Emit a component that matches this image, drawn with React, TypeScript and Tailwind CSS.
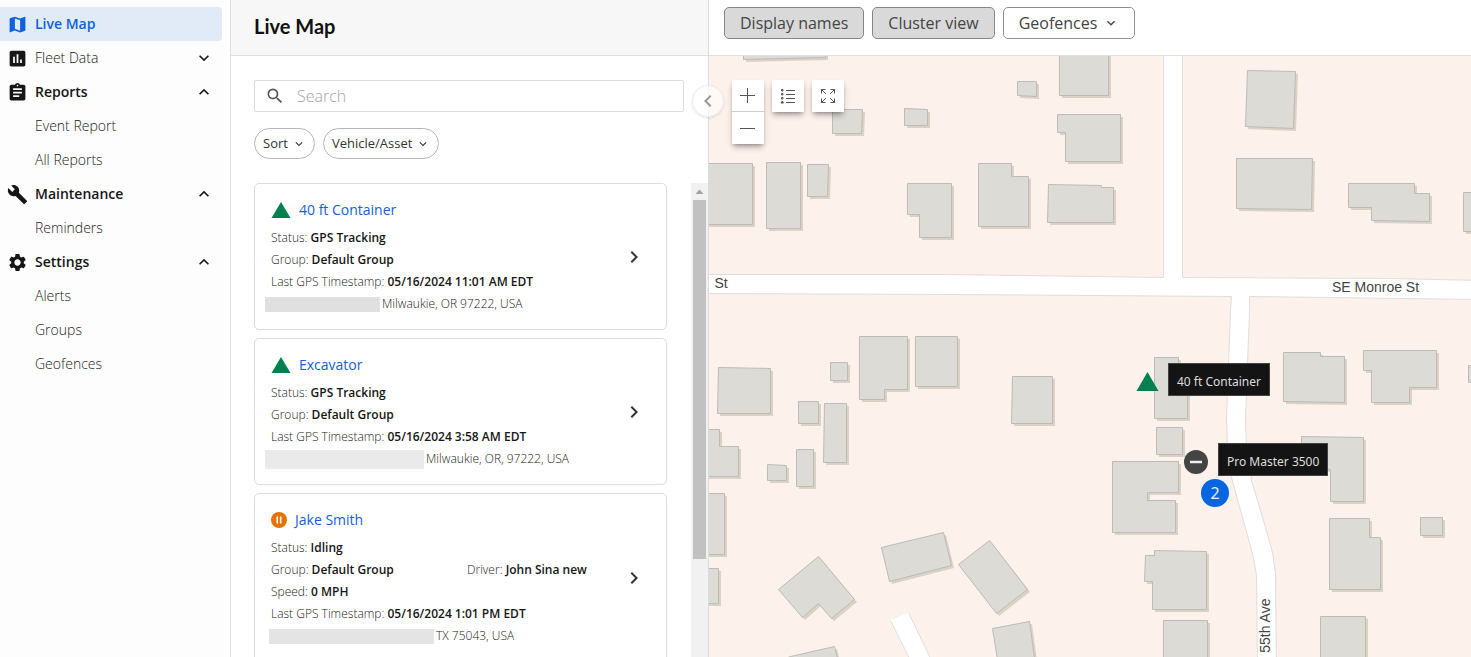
import React, { useState } from 'react';
import {
  MdAssessment,
  MdAssignment,
  MdBuild,
  MdChevronLeft,
  MdChevronRight,
  MdExpandLess,
  MdExpandMore,
  MdMap,
  MdSearch,
  MdSettings,
} from 'react-icons/md';

const sections = [
  { label: 'Fleet Data', icon: MdAssessment, open: false, items: [] },
  { label: 'Reports', icon: MdAssignment, open: true, items: ['Event Report', 'All Reports'] },
  { label: 'Maintenance', icon: MdBuild, open: true, items: ['Reminders'] },
  { label: 'Settings', icon: MdSettings, open: true, items: ['Alerts', 'Groups', 'Geofences'] },
];

const vehicles = [
  {
    name: '40 ft Container',
    type: 'asset',
    status: 'GPS Tracking',
    timestamp: '05/16/2024 11:01 AM EDT',
    address: 'Milwaukie, OR 97222, USA',
    mask: '-ml-1.5 w-[115px] h-[15px] bg-[#e1e0e0]',
  },
  {
    name: 'Excavator',
    type: 'asset',
    status: 'GPS Tracking',
    timestamp: '05/16/2024 3:58 AM EDT',
    address: 'Milwaukie, OR, 97222, USA',
    mask: '-ml-1.5 w-[159px] h-[19px] bg-[#eaeaea]',
  },
  {
    name: 'Jake Smith',
    type: 'vehicle',
    status: 'Idling',
    driver: 'John Sina new',
    speed: '0 MPH',
    timestamp: '05/16/2024 1:01 PM EDT',
    address: 'TX 75043, USA',
    mask: '-ml-0.5 w-[165px] h-[15px] bg-[#e4e4e5]',
  },
];

const buildings = [
  '743,50 743,59 825,57 825,50',
  '934,50 969,50 969,53 934,53',
  '1059,50 1108,50 1108,95 1059,95',
  '1017,81 1036,81 1036,96 1017,95',
  '832,109 862,109 861,133 832,133',
  '904,108 927,109 927,125 904,125',
  '1057,114 1120,114 1120,161 1065,161 1065,132 1057,132',
  '700,163 752,163 752,224 700,224',
  '766,162 800,162 800,228 766,228',
  '807,164 828,164 827,196 807,196',
  '907,183 951,183 951,237 919,237 919,214 907,214',
  '978,163 1011,163 1011,176 1028,176 1028,226 978,226',
  '1048,184 1101,185 1101,187 1113,187 1113,222 1047,222',
  '1247,70 1295,71 1293,128 1245,126',
  '1236,158 1312,158 1311,209 1236,208',
  '1348,183 1414,183 1414,193 1429,193 1429,221 1371,220 1371,207 1348,207',
  '1463,192 1480,192 1480,231 1463,231',
  '718,367 770,368 770,413 717,413',
  '830,362 847,362 847,380 830,380',
  '859,336 907,336 907,389 884,389 884,399 859,399',
  '915,336 957,336 957,386 915,386',
  '1012,376 1052,376 1052,423 1011,423',
  '798,401 818,401 818,423 798,423',
  '824,403 846,403 846,462 823,462',
  '700,429 719,429 719,446 738,446 738,476 700,476',
  '767,464 786,465 786,480 767,480',
  '796,449 813,449 813,486 796,486',
  '700,493 724,493 724,554 700,554',
  '700,568 718,568 718,603 700,603',
  '778,589 818,556 854,599 831,618 818,603 802,617',
  '881,547 943,532 951,565 889,581',
  '958,564 989,540 1027,589 996,613',
  '774,662 790,656 834,646 838,662',
  '992,628 1029,621 1035,665 998,665',
  '1154,357 1178,357 1178,390 1187,390 1187,418 1154,418',
  '1156,427 1182,427 1182,454 1156,454',
  '1112,461 1178,461 1178,492 1147,492 1147,500 1175,500 1175,532 1112,532',
  '1145,555 1154,555 1154,550 1206,551 1206,609 1152,609 1152,581 1144,581',
  '1163,620 1207,620 1207,665 1163,665',
  '1283,352 1320,352 1320,356 1344,356 1344,402 1283,401',
  '1363,350 1436,350 1436,387 1409,387 1409,402 1371,402 1371,370 1363,370',
  '1468,365 1480,365 1480,382 1468,382',
  '1301,436 1363,437 1363,501 1330,501 1330,469 1301,469',
  '1329,518 1369,518 1369,537 1380,537 1380,589 1329,589',
  '1420,517 1442,517 1442,535 1420,535',
  '1320,616 1365,616 1365,665 1320,665',
];

const Sidebar: React.FC = () => (
  <nav className="w-[231px] shrink-0 border-r border-[#dfdfdf] bg-[#fdfdfd] pt-[7px] text-sm">
    <a href="#live-map" className="mr-2 flex h-[34px] items-center gap-[7px] rounded-r bg-[#e1ebf7] pl-[7px] font-semibold text-[#0b62dc]">
      <MdMap className="size-[21px]" />
      Live Map
    </a>
    {sections.map(({ label, icon: Icon, open, items }) => (
      <div key={label}>
        <button
          type="button"
          aria-expanded={open}
          className={`flex h-[34px] w-full items-center gap-[7px] pl-[7px] pr-4 text-[#161616] ${open ? 'font-semibold' : 'font-light'}`}
        >
          <Icon className="size-[21px]" />
          <span className="flex-1 text-left">{label}</span>
          {open ? <MdExpandLess className="size-5" /> : <MdExpandMore className="size-5" />}
        </button>
        {items.map((item) => (
          <a key={item} href="#reports" className="flex h-[34px] items-center pl-[35px] font-light text-[#222]">
            {item}
          </a>
        ))}
      </div>
    ))}
  </nav>
);

const Field: React.FC<{ label: string; value: string; className?: string }> = ({ label, value, className }) => (
  <span className={className}>
    {label}: <span className="font-semibold text-[#161616]">{value}</span>
  </span>
);

const VehicleCard: React.FC<{ vehicle: (typeof vehicles)[number] }> = ({ vehicle }) => (
  <li className="flex items-center rounded-[5px] border border-[#dcdcdc] bg-white pt-[15px] pr-5 pb-3.5 pl-4">
    <div className="min-w-0 flex-1 text-xs/[22px] font-light whitespace-nowrap text-[#222]">
      <div className="mb-1.5 flex h-[22px] items-center gap-2">
        {vehicle.type === 'asset' ? (
          <svg width="20" height="16" viewBox="0 0 20 16" className="shrink-0">
            <path d="M10 0L19.500 16H.5z" fill="#00804f" />
          </svg>
        ) : (
          <svg width="16" height="16" viewBox="0 0 16 16" className="shrink-0">
            <circle cx="8" cy="8" r="8" fill="#e57200" />
            <path d="M6.300 4.500v7M9.700 4.500v7" stroke="#fff" strokeWidth="1.600" />
          </svg>
        )}
        <a href="#vehicle" className="text-sm font-normal text-[#1560d8]">{vehicle.name}</a>
      </div>
      <div>
        <Field label="Status" value={vehicle.status} />
      </div>
      <div className="flex">
        <Field label="Group" value="Default Group" className="w-[196px]" />
        {vehicle.driver && <Field label="Driver" value={vehicle.driver} />}
      </div>
      {vehicle.speed && (
        <div>
          <Field label="Speed" value={vehicle.speed} />
        </div>
      )}
      <div>
        <Field label="Last GPS Timestamp" value={vehicle.timestamp} />
      </div>
      <div className="flex items-center gap-0.5">
        <span className={`shrink-0 ${vehicle.mask}`} />
        {vehicle.address}
      </div>
    </div>
    <button type="button" aria-label={`Open ${vehicle.name}`} className="text-[#333]">
      <MdChevronRight className="size-6" />
    </button>
  </li>
);

const ListPanel: React.FC = () => {
  const [search, setSearch] = useState('');

  return (
    <section className="flex w-[478px] shrink-0 flex-col border-r border-[#dcdcdc]">
      <header className="flex h-14 shrink-0 items-center border-b border-[#dfdfdf] bg-[#f7f7f7] pb-1 pl-[23px]">
        <h1 className="font-[Lato,sans-serif] text-xl font-bold text-[#111]">Live Map</h1>
      </header>
      <div className="pt-6 pr-6 pl-[23px]">
        <label className="flex h-8 items-center gap-3 rounded-xs border border-[#dcdcdc] pl-2.5">
          <MdSearch className="size-5 text-[#555]" />
          <input
            type="text"
            aria-label="Search"
            placeholder="Search"
            value={search}
            onChange={(e) => setSearch(e.target.value)}
            className="min-w-0 flex-1 bg-transparent font-light outline-none placeholder:text-[#a5a5a5]"
          />
        </label>
        <div className="mt-4 flex gap-2 text-[13px] text-[#333]">
          <button type="button" className="flex h-[31px] items-center gap-1 rounded-full border border-[#b5b5b5] px-2">
            Sort <MdExpandMore className="size-3.5" />
          </button>
          <button type="button" className="flex h-[31px] items-center gap-1 rounded-full border border-[#b5b5b5] px-2">
            Vehicle/Asset <MdExpandMore className="size-3.5" />
          </button>
        </div>
      </div>
      <div className="mt-6 flex min-h-0 flex-1 overflow-hidden">
        <ul className="flex flex-1 flex-col gap-2 pr-6 pl-[23px]">
          {vehicles.map((vehicle) => (
            <VehicleCard key={vehicle.name} vehicle={vehicle} />
          ))}
        </ul>
        <div className="flex w-[17px] flex-col items-center bg-[#f1f1f1]">
          <svg width="17" height="17" viewBox="0 0 17 17">
            <path d="M8.500 6.500L12.500 11h-8z" fill="#a3a3a3" />
          </svg>
          <div className="h-[359px] w-[13px] bg-[#c1c1c1]" />
        </div>
      </div>
    </section>
  );
};

const MapDrawing: React.FC = () => (
  <svg className="block h-full w-full">
    <g transform="translate(-708.5 -55.5)">
      <path
        d="M700 274L950 274L1163 277V50H1182V277L1390 278L1480 280V299L1249 296L1249 310L1245 420L1246 448L1251 480L1265 527L1272 552L1275 573L1276 665H1257L1256 575L1253 557L1231 477L1227 445L1226 418L1230 310L1231 296L955 294L700 293z"
        fill="#fff"
        stroke="#dedede"
      />
      <path d="M890 620L908 612L932 662H911z" fill="#fff" />
      <path d="M890 620L911 662M908 612L932 662" stroke="#dedede" />
      {buildings.map((points) => (
        <g key={points}>
          <polygon points={points} transform="translate(2.5 2.5)" fill="#dbd2c6" />
          <polygon points={points} fill="#dcdbd6" stroke="#bcbbb8" />
        </g>
      ))}
      <g fill="#444" className="font-['Liberation_Sans',sans-serif] text-sm">
        <text x="714" y="287">St</text>
        <text x="1375" y="291" textAnchor="middle">SE Monroe St</text>
        <text transform="translate(1269 598) rotate(-90)" textAnchor="end">55th Ave</text>
      </g>
    </g>
  </svg>
);

const mapButton = 'flex size-8 items-center justify-center bg-white text-[#555]';

const LiveMap: React.FC = () => (
  <main className="flex min-w-0 flex-1 flex-col">
    <header className="flex h-14 shrink-0 gap-2 border-b border-[#dfdfdf] pt-[7px] pl-[15px] text-[#444]">
      <button type="button" aria-pressed="true" className="h-8 rounded-[5px] border border-[#858585] bg-[#d9d9d9] px-[15px]">
        Display names
      </button>
      <button type="button" aria-pressed="true" className="h-8 rounded-[5px] border border-[#858585] bg-[#d9d9d9] px-[15px]">
        Cluster view
      </button>
      <button type="button" className="flex h-8 items-center gap-1.5 rounded-[5px] border border-[#8f8f8f] bg-white px-[15px]">
        Geofences <MdExpandMore className="size-4" />
      </button>
    </header>
    <div className="relative min-h-0 flex-1 bg-[#fcf1eb]">
      <MapDrawing />

      <button
        type="button"
        aria-label="Collapse list"
        className="absolute top-[29px] -left-[17px] flex size-8 items-center justify-center rounded-full border border-[#ececec] bg-white/60 text-[#999] shadow-sm"
      >
        <MdChevronLeft className="size-6" />
      </button>

      <div className="absolute top-6 left-[23px] flex items-start gap-2">
        <div className="divide-y divide-[#ccc] shadow-md shadow-black/30">
          <button type="button" aria-label="Zoom in" className={mapButton}>
            <svg width="16" height="16" stroke="currentColor">
              <path d="M0 7.500h15M7.500 0v15" />
            </svg>
          </button>
          <button type="button" aria-label="Zoom out" className={mapButton}>
            <svg width="16" height="16" stroke="currentColor">
              <path d="M0 8.500h15" />
            </svg>
          </button>
        </div>
        <button type="button" aria-label="Legend" className={`${mapButton} shadow-md shadow-black/30`}>
          <svg width="16" height="16" fill="none" stroke="currentColor">
            <path d="M6 2.500h9M6 6.500h9M6 10.500h9M6 14.500h9" />
            <path d="M1.500 1.500h1.500v1.500h-1.500zM1.500 5.500h1.500v1.500h-1.500zM1.500 9.500h1.500v1.500h-1.500z" />
            <path d="M2.300 13L3.500 15h-2.500z" fill="currentColor" />
          </svg>
        </button>
        <button type="button" aria-label="Full screen" className={`${mapButton} shadow-md shadow-black/30`}>
          <svg width="16" height="16" fill="none" stroke="currentColor">
            <path d="M5.500 1.500h-4v4M1.500 1.500L6 6M10.500 1.500h4v4M14.500 1.500L10 6M1.500 10.500v4h4M1.500 14.500L6 10M14.500 10.500v4h-4M14.500 14.500L10 10" />
          </svg>
        </button>
      </div>

      <svg width="24" height="20" viewBox="0 0 24 20" className="absolute top-[316px] left-[427px]">
        <path d="M11.500 0L22.500 19H.5z" fill="#00804f" />
      </svg>
      <div className="absolute top-[307px] left-[459px] flex h-[33px] items-center border border-[#444] bg-[#141414] px-2 pt-1 font-['Noto_Sans',sans-serif] text-xs whitespace-nowrap text-[#ddd]">
        40 ft Container
      </div>
      <svg width="24" height="24" viewBox="0 0 24 24" className="absolute top-[394px] left-[475px]">
        <circle cx="12" cy="12" r="12" fill="#444" />
        <path d="M6 12h12" stroke="#eee" strokeWidth="2.500" />
      </svg>
      <div className="absolute top-[387px] left-[509px] flex h-[33px] items-center border border-[#444] bg-[#141414] px-2 pt-1 font-['Noto_Sans',sans-serif] text-xs whitespace-nowrap text-[#ddd]">
        Pro Master 3500
      </div>
      <div className="absolute top-[423px] left-[492px] flex size-7 items-center justify-center rounded-full bg-[#0566e0] font-['Noto_Sans',sans-serif] text-base text-[#eee]">
        2
      </div>
    </div>
  </main>
);

const App: React.FC = () => (
  <div className="flex h-screen overflow-hidden bg-white font-['Open_Sans',sans-serif]">
    <Sidebar />
    <ListPanel />
    <LiveMap />
  </div>
);

export default App;
